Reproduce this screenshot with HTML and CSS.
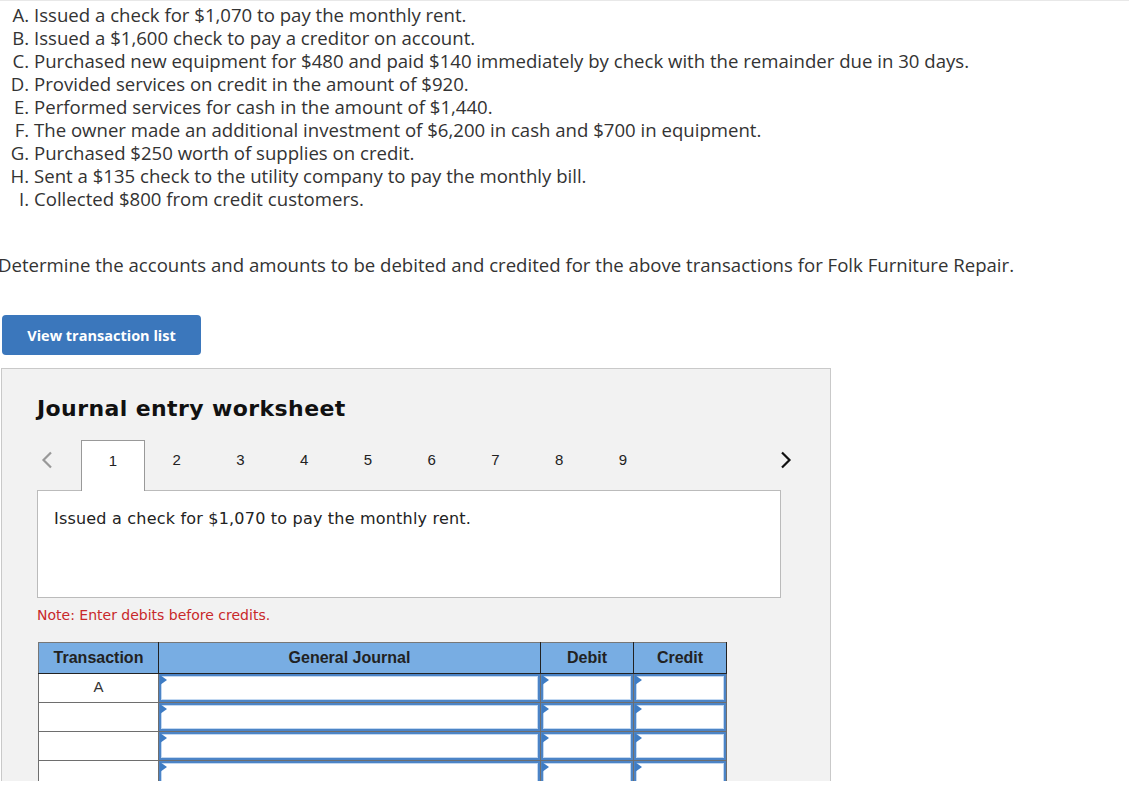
FILE: index.html
```html
<!DOCTYPE html>
<html>
<head>
  <meta charset="UTF-8">
  <title>Journal Entry Worksheet</title>
  <link rel="stylesheet" href="styles.css">
</head>
<body>
  <div class="page">
    <ol class="transactions">
      <li>Issued a check for $1,070 to pay the monthly rent.</li>
      <li>Issued a $1,600 check to pay a creditor on account.</li>
      <li>Purchased new equipment for $480 and paid $140 immediately by check with the remainder due in 30 days.</li>
      <li>Provided services on credit in the amount of $920.</li>
      <li>Performed services for cash in the amount of $1,440.</li>
      <li>The owner made an additional investment of $6,200 in cash and $700 in equipment.</li>
      <li>Purchased $250 worth of supplies on credit.</li>
      <li>Sent a $135 check to the utility company to pay the monthly bill.</li>
      <li>Collected $800 from credit customers.</li>
    </ol>

    <p class="instructions">Determine the accounts and amounts to be debited and credited for the above transactions for Folk Furniture Repair.</p>

    <button class="list-button">View transaction list</button>

    <!-- Worksheet panel -->
    <div class="worksheet-clip">
      <div class="worksheet">
        <h2>Journal entry worksheet</h2>

        <div class="tab-nav">
          <span class="arrow prev">
            <svg width="12" height="18" viewBox="0 0 12 18"><path d="M10 1.5 L2.5 9 L10 16.5" fill="none" stroke="#999" stroke-width="2.2"/></svg>
          </span>
          <div class="tabs">
            <span class="tab active">1</span>
            <span class="tab">2</span>
            <span class="tab">3</span>
            <span class="tab">4</span>
            <span class="tab">5</span>
            <span class="tab">6</span>
            <span class="tab">7</span>
            <span class="tab">8</span>
            <span class="tab">9</span>
          </div>
          <span class="arrow next">
            <svg width="12" height="18" viewBox="0 0 12 18"><path d="M2 1.5 L9.5 9 L2 16.5" fill="none" stroke="#111" stroke-width="2.2"/></svg>
          </span>
        </div>

        <div class="description">Issued a check for $1,070 to pay the monthly rent.</div>

        <p class="note">Note: Enter debits before credits.</p>

        <table class="journal">
          <thead>
            <tr>
              <th class="col-trans">Transaction</th>
              <th class="col-journal">General Journal</th>
              <th class="col-amount">Debit</th>
              <th class="col-amount">Credit</th>
            </tr>
          </thead>
          <tbody>
            <tr>
              <td class="trans">A</td>
              <td class="entry"><div class="field"><span class="flag"></span></div></td>
              <td class="entry"><div class="field"><span class="flag"></span></div></td>
              <td class="entry"><div class="field"><span class="flag"></span></div></td>
            </tr>
            <tr>
              <td class="trans"></td>
              <td class="entry"><div class="field"><span class="flag"></span></div></td>
              <td class="entry"><div class="field"><span class="flag"></span></div></td>
              <td class="entry"><div class="field"><span class="flag"></span></div></td>
            </tr>
            <tr>
              <td class="trans"></td>
              <td class="entry"><div class="field"><span class="flag"></span></div></td>
              <td class="entry"><div class="field"><span class="flag"></span></div></td>
              <td class="entry"><div class="field"><span class="flag"></span></div></td>
            </tr>
            <tr>
              <td class="trans"></td>
              <td class="entry"><div class="field"><span class="flag"></span></div></td>
              <td class="entry"><div class="field"><span class="flag"></span></div></td>
              <td class="entry"><div class="field"><span class="flag"></span></div></td>
            </tr>
          </tbody>
        </table>
      </div>
    </div>
  </div>
</body>
</html>
```

FILE: styles.css
```css
body {
  margin: 0;
  font-family: 'Open Sans', Lato, sans-serif;
  color: #333;
  background-color: #fff;
}

.page {
  border-top: 1px solid #e8e8e8;
  padding-top: 2px;
}

/* Transaction list */
.transactions {
  list-style-type: upper-alpha;
  margin: 0;
  padding-left: 34px;
  font-size: 18.6px;
  line-height: 23px;
}

.instructions {
  margin: 43px 0 0 -2px;
  font-size: 18.6px;
  line-height: 23px;
}

.list-button {
  display: block;
  margin: 39px 0 0 2px;
  width: 199px;
  height: 40px;
  background-color: #3b77bc;
  color: white;
  border: none;
  border-radius: 4px;
  font-family: 'Open Sans', Lato, sans-serif;
  font-size: 14.5px;
  font-weight: 700;
  cursor: pointer;
}

/* Worksheet */
.worksheet-clip {
  margin: 13px 0 0 1px;
  width: 830px;
  height: 413px;
  overflow: hidden;
}

.worksheet {
  background-color: #f2f2f2;
  border: 1px solid #c9c9c9;
  padding: 25px 35px 40px;
  min-height: 420px;
}

.worksheet h2 {
  margin: 0;
  font-family: 'DejaVu Sans', Verdana, sans-serif;
  font-size: 22px;
  font-weight: bold;
  letter-spacing: 0.4px;
  color: #111;
  line-height: 30px;
}

.tab-nav {
  display: flex;
  align-items: flex-end;
  margin-top: 16px;
  width: 755px;
}

.arrow {
  height: 50px;
  display: flex;
  align-items: center;
  padding-bottom: 10px;
  box-sizing: border-box;
}

.arrow.prev {
  width: 44px;
  padding-left: 4px;
}

.arrow.next {
  margin-left: auto;
}

.tabs {
  display: flex;
}

.tab {
  width: 63.75px;
  height: 50px;
  line-height: 40px;
  text-align: center;
  font-family: Arial, 'Liberation Sans', sans-serif;
  font-size: 15px;
  color: #222;
  box-sizing: border-box;
}

.tab.active {
  background-color: white;
  border: 1px solid #999;
  border-bottom: none;
  position: relative;
  z-index: 1;
  margin-bottom: -1px;
  height: 51px;
}

.description {
  width: 744px;
  height: 108px;
  box-sizing: border-box;
  background-color: white;
  border: 1px solid #bbb;
  padding: 18px 16px;
  font-family: 'DejaVu Sans', Verdana, sans-serif;
  font-size: 16px;
  letter-spacing: 0.2px;
  color: #222;
}

.note {
  margin: 9px 0 0;
  font-family: 'DejaVu Sans', Verdana, sans-serif;
  font-size: 14px;
  color: #c8282a;
  line-height: 16px;
}

/* Journal table */
.journal {
  margin: 19px 0 0 1px;
  border-collapse: collapse;
  font-family: Arial, 'Liberation Sans', sans-serif;
  font-size: 16px;
  table-layout: fixed;
  width: 688px;
}

.journal th {
  background-color: #78ade3;
  color: #222;
  font-weight: bold;
  height: 30px;
  padding: 0;
  border: 1px solid #222;
  border-top-color: #777;
}

.journal th:first-child {
  border-left-color: #777;
}

.col-trans { width: 119px; }
.col-journal { width: 381px; }
.col-amount { width: 92px; }

.journal td {
  height: 28px;
  padding: 0;
  border: 1px solid #6e6e6e;
  background-color: white;
}

.trans {
  text-align: center;
  color: #333;
  vertical-align: top;
  line-height: 25px;
  font-size: 15px;
}

.field {
  position: relative;
  height: 28px;
  box-sizing: border-box;
  border: 2px solid #4c84c6;
  box-shadow: inset 0 0 0 1px #c2d8f1;
}

.flag {
  position: absolute;
  top: -1px;
  left: -1px;
  width: 0;
  height: 0;
  border-top: 5px solid transparent;
  border-bottom: 5px solid transparent;
  border-left: 7px solid #3e7cc4;
}
```
